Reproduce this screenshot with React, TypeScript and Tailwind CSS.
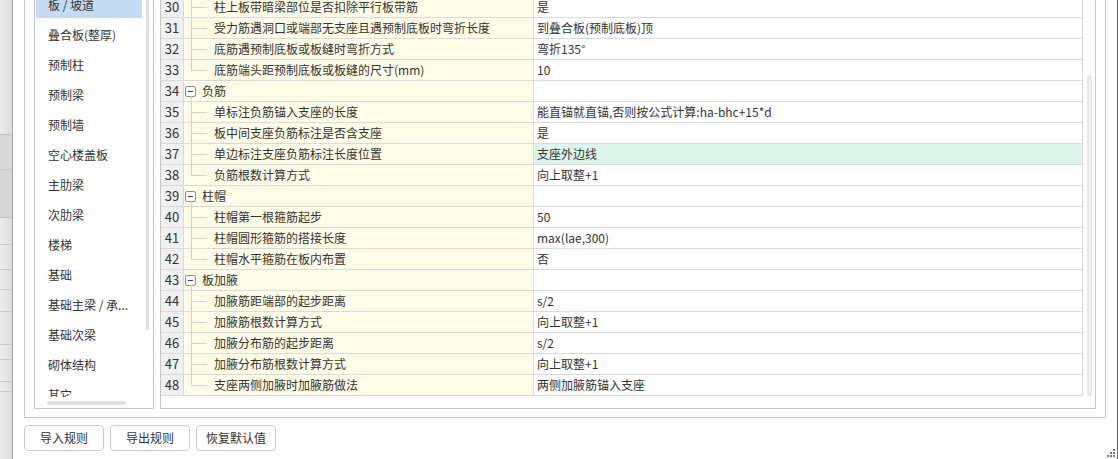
import React from "react";

type RowData = {
  no: number;
  kind: "child" | "last" | "group";
  name: string;
  value?: string;
  hl?: boolean;
};

const rows: RowData[] = [
  { no: 30, kind: "child", name: "柱上板带暗梁部位是否扣除平行板带筋", value: "是" },
  { no: 31, kind: "child", name: "受力筋遇洞口或端部无支座且遇预制底板时弯折长度", value: "到叠合板(预制底板)顶" },
  { no: 32, kind: "child", name: "底筋遇预制底板或板缝时弯折方式", value: "弯折135°" },
  { no: 33, kind: "last", name: "底筋端头距预制底板或板缝的尺寸(mm)", value: "10" },
  { no: 34, kind: "group", name: "负筋" },
  { no: 35, kind: "child", name: "单标注负筋锚入支座的长度", value: "能直锚就直锚,否则按公式计算:ha-bhc+15*d" },
  { no: 36, kind: "child", name: "板中间支座负筋标注是否含支座", value: "是" },
  { no: 37, kind: "child", name: "单边标注支座负筋标注长度位置", value: "支座外边线", hl: true },
  { no: 38, kind: "last", name: "负筋根数计算方式", value: "向上取整+1" },
  { no: 39, kind: "group", name: "柱帽" },
  { no: 40, kind: "child", name: "柱帽第一根箍筋起步", value: "50" },
  { no: 41, kind: "child", name: "柱帽圆形箍筋的搭接长度", value: "max(lae,300)" },
  { no: 42, kind: "last", name: "柱帽水平箍筋在板内布置", value: "否" },
  { no: 43, kind: "group", name: "板加腋" },
  { no: 44, kind: "child", name: "加腋筋距端部的起步距离", value: "s/2" },
  { no: 45, kind: "child", name: "加腋筋根数计算方式", value: "向上取整+1" },
  { no: 46, kind: "child", name: "加腋分布筋的起步距离", value: "s/2" },
  { no: 47, kind: "child", name: "加腋分布筋根数计算方式", value: "向上取整+1" },
  { no: 48, kind: "last", name: "支座两侧加腋时加腋筋做法", value: "两侧加腋筋锚入支座" },
];

const categories = [
  "板 / 坡道",
  "叠合板(整厚)",
  "预制柱",
  "预制梁",
  "预制墙",
  "空心楼盖板",
  "主肋梁",
  "次肋梁",
  "楼梯",
  "基础",
  "基础主梁 / 承...",
  "基础次梁",
  "砌体结构",
  "其它",
];

function TreeCell({ r }: { r: RowData }) {
  if (r.kind === "group") {
    return (
      <div className="relative h-full flex items-center">
        <span className="ml-[1px] w-[11px] h-[11px] border border-[#8c8c8c] rounded-[2px] bg-white flex items-center justify-center">
          <span className="w-[5px] h-px bg-[#444]" />
        </span>
        <span className="absolute left-[7px] top-[15px] bottom-0 w-px bg-[#d2d2d2]" />
        <span className="ml-[6px] text-[#333]">{r.name}</span>
      </div>
    );
  }
  return (
    <div className="relative h-full flex items-center">
      <span
        className={
          r.kind === "last"
            ? "absolute left-[7px] top-0 h-[11px] w-px bg-[#d2d2d2]"
            : "absolute left-[7px] top-0 bottom-0 w-px bg-[#d2d2d2]"
        }
      />
      <span className="absolute left-[7px] top-[10px] w-[16px] h-px bg-[#d2d2d2]" />
      <span className="pl-[30px] text-[#333] whitespace-nowrap">{r.name}</span>
    </div>
  );
}

function GridRow({ r }: { r: RowData }) {
  return (
    <div className="flex h-[21px] border-b border-[#d9d9d9]">
      <div className="w-[23px] shrink-0 bg-[#f0f0f0] border-r border-[#d9d9d9] flex items-center justify-center text-[13px] text-[#333]">
        {r.no}
      </div>
      <div className="w-[350px] shrink-0 bg-[#fffce8] border-r border-[#d9d9d9]">
        <TreeCell r={r} />
      </div>
      <div
        className={`w-[549px] shrink-0 border-r border-[#d9d9d9] flex items-center pl-[3px] text-[#333] whitespace-nowrap ${
          r.hl ? "bg-[#ddf5eb]" : "bg-white"
        }`}
      >
        {r.value}
      </div>
    </div>
  );
}

export default function App() {
  return (
    <div className="w-[1118px] h-[459px] overflow-hidden flex bg-white text-[12px] font-['Noto_Sans_CJK_SC','Noto_Sans',sans-serif]">
      {/* window behind the dialog */}
      <div className="w-[12px] shrink-0 h-full bg-gradient-to-r from-[#ececec] to-[#dcdcdc] flex flex-col">
        <div className="h-[135px] border-b border-[#c4c4c4]" />
        <div className="h-[35px] bg-[#d9d9d9] border-b border-[#c4c4c4]" />
        <div className="h-[48px] bg-[#d6d6d6] border-b border-[#c4c4c4]" />
        <div className="h-[27px] border-b border-[#c8c8c8]" />
        <div className="h-[25px] border-b border-[#c8c8c8]" />
        <div className="h-[20px] border-b border-[#c8c8c8]" />
        <div className="h-[22px] border-b border-[#c8c8c8]" />
        <div className="h-[33px] border-b border-[#c8c8c8]" />
        <div className="h-[15px] border-b border-[#c8c8c8]" />
        <div className="h-[22px] border-b border-[#c8c8c8]" />
        <div className="h-[10px] border-b border-[#c8c8c8]" />
        <div className="flex-1" />
      </div>

      {/* dialog */}
      <div className="relative flex-1 h-full bg-white border-l border-[#a3a3a3] border-r border-r-[#6e6e6e] pl-[11px] pr-[11px] flex flex-col">
        <div className="-mt-[14px] h-[432px] border border-[#c6c6c6] pt-[9px] pb-[8px] pl-[9px] pr-[9px] flex gap-[6px]">
          {/* category list */}
          <div className="w-[120px] shrink-0 h-full border border-[#c6c6c6] flex flex-col">
            <div className="relative flex-1 overflow-hidden">
              <div className="-mt-[4px] flex flex-col gap-[5px]">
                {categories.map((c, i) => (
                  <div
                    key={c}
                    className={`ml-[1px] w-[106px] h-[25px] shrink-0 flex items-center pl-[12px] pb-[2px] whitespace-nowrap text-[#333] ${
                      i === 0 ? "bg-[#c4dbf2]" : ""
                    }`}
                  >
                    {c}
                  </div>
                ))}
              </div>
              <div className="absolute left-[111px] top-0 h-[333px] w-[3px] rounded-full bg-[#dedede]" />
            </div>
            <div className="h-[11px] shrink-0 flex items-center">
              <div className="ml-[12px] w-[79px] h-[4px] rounded-full bg-[#e2e2e2]" />
            </div>
          </div>

          {/* rule grid */}
          <div className="flex-1 h-full border border-[#c6c6c6] flex">
            <div className="w-[922px] shrink-0 flex flex-col">
              {rows.map((r) => (
                <GridRow key={r.no} r={r} />
              ))}
            </div>
            <div className="flex-1 flex flex-col pl-[4px]">
              <div className="mt-[78px] w-[5px] h-[321px] rounded-full bg-[#ebebeb]" />
            </div>
          </div>
        </div>

        {/* buttons */}
        <div className="mt-[7px] flex gap-[6px]">
          {["导入规则", "导出规则", "恢复默认值"].map((b) => (
            <button
              key={b}
              className="w-[80px] h-[26px] border border-[#cbcbcb] rounded-[4px] bg-white text-[12px] text-[#333] flex items-center justify-center"
            >
              {b}
            </button>
          ))}
        </div>

        {/* resize grip */}
        <svg className="absolute right-[1px] bottom-[1px]" width="9" height="9" viewBox="0 0 9 9">
          <rect x="6" y="0" width="2" height="2" fill="#7a7a7a" />
          <rect x="3" y="3" width="2" height="2" fill="#7a7a7a" />
          <rect x="6" y="3" width="2" height="2" fill="#7a7a7a" />
          <rect x="0" y="6" width="2" height="2" fill="#7a7a7a" />
          <rect x="3" y="6" width="2" height="2" fill="#7a7a7a" />
          <rect x="6" y="6" width="2" height="2" fill="#7a7a7a" />
        </svg>
      </div>
    </div>
  );
}
